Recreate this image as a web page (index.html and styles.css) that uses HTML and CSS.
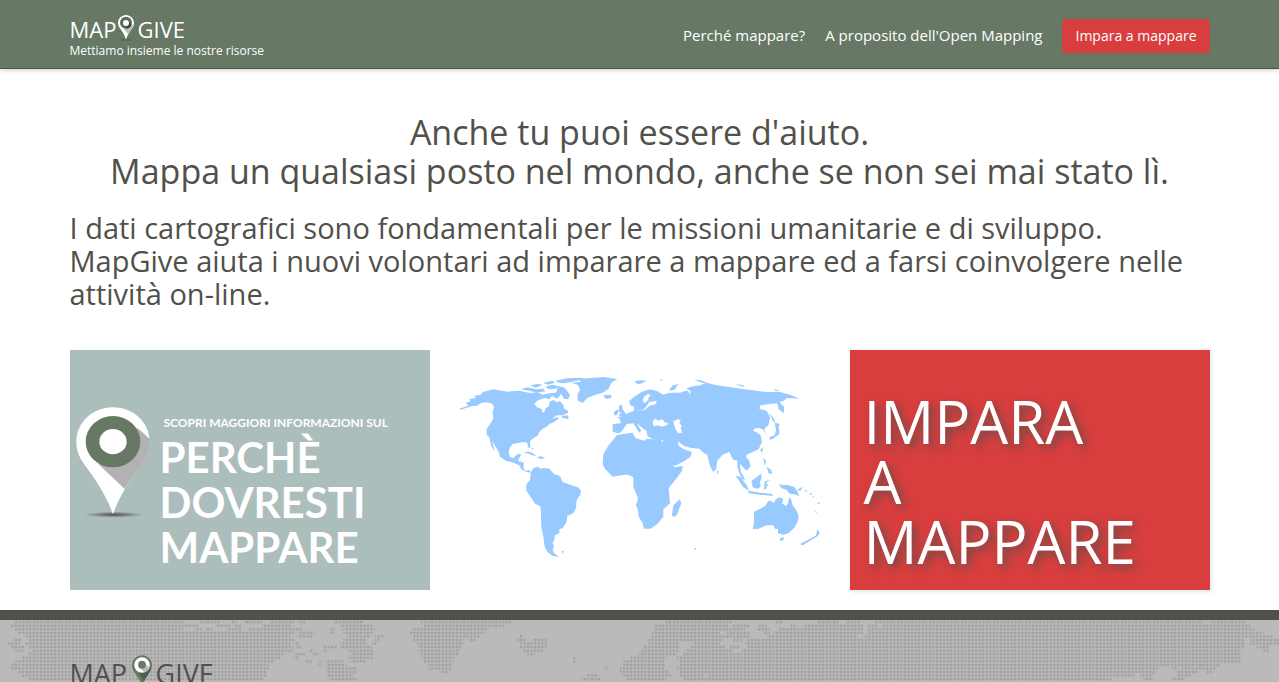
FILE: index.html
```html
<!DOCTYPE html>
<html lang="it">
<head>
<meta charset="utf-8">
<meta name="viewport" content="width=device-width, initial-scale=1">
<title>MapGive</title>
<link rel="stylesheet" href="styles.css">
</head>
<body>
<header class="site-header">
  <div class="container header-row">
    <a class="brand" href="#">
      <span class="wordmark">
        <span class="word-map">MAP</span>
        <svg class="brand-pin" viewBox="0 0 48 78" aria-hidden="true">
          <ellipse cx="24" cy="74" rx="17" ry="3" fill="#4f5c4e" opacity=".6"/>
          <path d="M24 0C11 0 0 11 0 24c0 9 5 15 10 22 6 9 11 18 14 28 3-10 8-19 14-28 5-7 10-13 10-22C48 11 37 0 24 0z" fill="#fff"/>
          <path d="M37 36L48 27c-1 8-5 13-10 19l-7 12-14-16z" fill="#bdbdbd"/>
          <circle cx="24" cy="23" r="18" fill="#5c6b5a"/>
          <path d="M30 17l11 12a18 18 0 0 1-13 12L18 30z" fill="#3f4a3e"/>
          <circle cx="24" cy="24" r="9" fill="#fff"/>
        </svg>
        <span>GIVE</span>
      </span>
      <span class="tagline">Mettiamo insieme le nostre risorse</span>
    </a>
    <nav class="main-nav">
      <a href="#">Perché mappare?</a>
      <a href="#">A proposito dell'Open Mapping</a>
      <a class="nav-button" href="#">Impara a mappare</a>
    </nav>
  </div>
</header>

<main class="container main">
  <h1 class="title">Anche tu puoi essere d'aiuto.<br>Mappa un qualsiasi posto nel mondo, anche se non sei mai stato lì.</h1>
  <h2 class="lead">I dati cartografici sono fondamentali per le missioni umanitarie e di sviluppo. MapGive aiuta i nuovi volontari ad imparare a mappare ed a farsi coinvolgere nelle attività on-line.</h2>
  <div class="tiles">
    <a class="tile tile-why" href="#">
      <svg class="why-pin" viewBox="0 0 228 336" aria-hidden="true">
        <defs><radialGradient id="ground"><stop offset="0" stop-color="#444" stop-opacity=".9"/><stop offset="1" stop-color="#444" stop-opacity="0"/></radialGradient></defs>
        <ellipse cx="113" cy="323" rx="90" ry="9" fill="url(#ground)"/>
        <path d="M111 1C50 1 1 47 1 105c0 32 14 55 34 81 34 46 60 90 76 136 16-46 42-90 76-136 20-26 34-49 34-81C221 47 172 1 111 1z" fill="#fff"/>
        <path d="M184 62l38 35c2 35-13 61-34 89-17 23-31 41-42 60L68 172z" fill="#b3b2b2"/>
        <ellipse cx="111" cy="104" rx="82" ry="77" fill="#677865"/>
        <ellipse cx="111" cy="104" rx="41" ry="38" fill="#fff"/>
      </svg>
      <span class="why-text">
        <span class="why-small">SCOPRI MAGGIORI INFORMAZIONI SUL</span>
        <span class="why-big">PERCHÈ<br>DOVRESTI<br>MAPPARE</span>
      </span>
    </a>
    <a class="tile" href="#" aria-label="Mappa del mondo">
      <svg class="world" viewBox="30 -30 1080 720" fill="#99caff">
        <!-- North and Central America -->
        <path d="M30 150L29 146 54 137 48 128 62 124 58 117 78 114 74 107 92 104 98 96 130 88 172 95 208 92 240 99 262 97 278 104 298 100 316 98 324 92 338 96 330 106 322 116 306 108 298 118 282 114 262 122 253 132 260 141 276 148 276 159 284 154 286 146 296 138 300 124 312 120 318 126 330 124 340 134 342 146 354 152 354 158 338 166 322 166 304 176 322 172 326 176 312 186 298 192 290 200 278 206 268 216 264 226 246 238 240 244 241 264 234 262 232 248 218 246 202 250 188 252 180 262 176 278 180 292 190 294 196 288 204 282 214 282 208 294 204 302 222 308 220 322 226 332 240 330 242 338 230 336 214 328 208 316 190 308 168 302 150 290 146 276 134 256 126 242 134 274 124 260 118 232 110 224 110 206 122 190 130 176 128 156 132 140 124 130 106 127 92 130 80 138 66 138z"/>
        <path d="M212 88l20-6 24 6 24-2 6 8-26 4-22-6zM242 76l22-5 14 4-22 8zM280 68l26-6 10 6-24 6zM286 80l20-6 18 4-6 8-22 2zM316 62l34-7 40-2 18 3-34 8-30 6-18-2zM322 78l20 4 12 14 6 10-6 12-12-2-8-14-14-6zM334 168l20-2 2 12-18-4zM220 280l14-6 14 6 12 8-14-2-12-6zM260 291l14-2 12 5-14 3zM244 262l6 4-2 6zM334 572l10 3-8 4z"/>
        <!-- Greenland and Iceland -->
        <path d="M362 68L392 66 388 58 420 54 462 51 502 57 484 68 476 86 458 98 432 106 412 114 398 129 384 122 382 104 390 90 384 74zM460 106l18-2 8 4-4 7-14 2zM552 64l20-3 18 1-14 8-12 3z"/>
        <!-- South America -->
        <path d="M242 338L250 324 264 320 270 326 282 324 298 326 312 342 330 348 338 366 360 374 384 382 393 392 390 406 380 420 378 444 370 460 352 468 350 486 338 504 328 508 328 520 314 526 314 538 308 548 312 560 308 570 312 580 328 590 308 588 292 576 284 560 280 530 274 500 272 440 254 430 240 408 228 390 230 372 240 360z"/>
        <!-- Africa -->
        <path d="M500 226L520 222 548 218 556 234 582 242 592 236 634 240 640 258 650 278 668 304 672 322 698 318 696 332 676 360 656 384 660 430 640 448 640 470 622 492 602 506 582 506 578 490 566 470 564 450 558 436 564 414 550 380 550 352 534 344 514 346 488 350 476 338 466 328 458 314 460 282 476 256 486 244zM670 436l20-18 4 12-14 36-10 5-4-6z"/>
        <!-- Europe and Asia -->
        <path fill-rule="evenodd" d="M488 216L488 192 512 190 510 178 502 172 518 168 536 158 552 152 552 140 540 136 538 122 556 108 574 96 600 88 622 94 640 104 658 98 690 98 702 94 714 92 720 104 722 92 708 86 722 80 750 76 770 68 800 76 842 82 900 90 950 96 990 96 1020 104 1048 116 1010 114 1002 122 988 126 1002 140 1002 160 986 148 982 130 958 132 932 136 928 146 950 152 960 172 956 194 942 208 952 228 938 208 926 204 912 206 910 212 922 218 932 226 936 246 926 268 904 278 890 284 888 292 898 302 902 318 890 332 878 320 870 312 872 334 880 348 886 362 876 356 868 340 862 320 862 302 848 298 838 276 818 284 802 302 798 328 790 336 780 318 772 284 762 280 748 266 724 264 702 258 684 244 686 258 702 268 708 270 726 276 722 290 702 304 674 318 664 306 650 280 634 254 640 240 618 240 606 236 592 228 590 214 570 198 560 190 574 212 568 218 550 190 530 192 518 210 508 220zM552 144l14 8 16-4 8-10 10-14-6-4-10 10-6-8 4-12 12-8 8 2-8 12 6 10 20-4-2 10-20 6-14 12-16 2zM610 198l14-2 12 4 14-4 6-6-14-4-4-8-12 4-10-6-8 8zM670 184l14-6 8 2-4 10 8 8-4 4 4 16-12 2-8-14z"/>
        <path d="M508 136l8-2 2 14 10 14-4 6-18 0 6-8-6-8zM492 156l10-8 4 6-6 12-8 0zM658 88l12-12 18-4-8 6-4 10-14 4zM732 59l20 2 20 8-14 0zM630 58l12 2-10 2zM856 72l28 4-6 4zM974 88l16 4-14 2zM958 158l14 18 4 14-8-8zM974 188l16 4-4 6 2 24-16 12-12 6-2-8 16-6 4-16zM800 328l6 8-4 8zM934 266l6-4-4 16-6-8zM940 294l8 8-4 16zM950 320l14 10 2 12-10-2zM856 346l16 6 20 26 4 14-16-10zM894 392l38 6 34 4 4 6-40-4-34-4zM904 362l16-10 14-12 0 14-4 14 2 12-10 6-14-4zM944 364l16-4-12 8 8 10-6 0-2 10-6 0zM986 372l14 4 10-2 22 6 10 14 6 14-18-6-10 0-10-12-16-6zM1040 390l18-10-6 12zM1070 390l20 16M1090 448l12 10-4 0z"/>
        <!-- Australia and New Zealand -->
        <path d="M912 456L930 446 946 438 954 424 964 422 970 430 978 418 988 412 1000 416 996 430 1008 438 1014 430 1018 410 1024 420 1028 436 1038 450 1046 466 1044 484 1034 502 1016 520 1000 524 984 520 984 506 976 508 970 496 950 496 926 506 908 508 912 490zM990 534l14-2-6 10-8 0zM1050 552l28-14 20-12 4-18 8 12-10 10-20 12-22 14z"/>
        <circle cx="736" cy="566" r="3"/><circle cx="1106" cy="430" r="3"/><circle cx="1068" cy="392" r="3"/><circle cx="1082" cy="402" r="3"/><circle cx="1090" cy="410" r="2"/>
      </svg>
    </a>
    <a class="tile tile-learn" href="#">IMPARA<br>A<br>MAPPARE</a>
  </div>
</main>

<footer class="site-footer">
  <svg class="dot-map" viewBox="0 60 3837 186" preserveAspectRatio="xMinYMin slice" aria-hidden="true">
    <defs>
      <pattern id="dots" x="0" y="61.2" width="10.667" height="10.667" patternUnits="userSpaceOnUse"><rect x="2" y="2" width="6.8" height="6.8" fill="#9f9f9f"/></pattern>
    </defs>
    <g stroke="url(#dots)" stroke-width="10.667" fill="none">
      <path d="M43 66.5H550M595 66.5H659M691 66.5H712M733 66.5H787M808 66.5H883M893 66.5H915M1000 66.5H1090M1262 66.5H1535M1995 66.5H2195M2325 66.5H2346M2453 66.5H2517M2540 66.5H2580M2625 66.5H3610M3632 66.5H3738"/>
      <path d="M32 77.2H595M648 77.2H690M702 77.2H723M787 77.2H872M1020 77.2H1120M1272 77.2H1515M1963 77.2H2185M2195 77.2H2250M2275 77.2H2300M2370 77.2H2390M2410 77.2H2590M2602 77.2H2635M2645 77.2H3750"/>
      <path d="M43 87.8H550M585 87.8H605M617 87.8H638M680 87.8H723M744 87.8H905M989 87.8H1006M1030 87.8H1125M1240 87.8H1462M1963 87.8H2235M2270 87.8H2310M2335 87.8H2590M2602 87.8H3765"/>
      <path d="M53 98.5H883M893 98.5H943M989 98.5H1006M1030 98.5H1120M1230 98.5H1455M1955 98.5H2160M2180 98.5H2250M2290 98.5H2310M2320 98.5H2590M2602 98.5H3790"/>
      <path d="M75 109.2H870M893 109.2H936M1042 109.2H1110M1125 109.2H1155M1240 109.2H1440M1560 109.2H1570M1955 109.2H2250M2300 109.2H2570M2590 109.2H3820"/>
      <path d="M43 119.8H65M85 119.8H883M1030 119.8H1100M1125 119.8H1140M1240 119.8H1390M1410 119.8H1430M1550 119.8H1580M1600 119.8H1640M1945 119.8H2170M2200 119.8H2225M2240 119.8H3735M3750 119.8H3837"/>
      <path d="M22 130.5H60M75 130.5H872M883 130.5H900M1020 130.5H1100M1115 130.5H1130M1250 130.5H1390M1560 130.5H1640M1945 130.5H2035M2080 130.5H2160M2235 130.5H3735M3750 130.5H3837"/>
      <path d="M32 141.2H75M85 141.2H880M890 141.2H905M968 141.2H1010M1020 141.2H1115M1255 141.2H1385M1560 141.2H1640M1930 141.2H2040M2070 141.2H2175M2190 141.2H2220M2240 141.2H3735M3770 141.2H3808"/>
      <path d="M43 151.8H70M96 151.8H880M925 151.8H940M968 151.8H985M1042 151.8H1120M1255 151.8H1380M1570 151.8H1635M1925 151.8H2035M2060 151.8H2200M2225 151.8H3718M3790 151.8H3810"/>
      <path d="M85 162.5H850M883 162.5H915M936 162.5H955M1052 162.5H1120M1262 162.5H1375M1582 162.5H1605M1915 162.5H2030M2050 162.5H3725"/>
      <path d="M64 173.2H840M880 173.2H895M1042 173.2H1120M1265 173.2H1365M1720 173.2H1730M1890 173.2H2000M2030 173.2H3725"/>
      <path d="M43 183.8H820M915 183.8H935M955 183.8H965M978 183.8H1030M1052 183.8H1100M1272 183.8H1360M1720 183.8H1730M1870 183.8H1995M2040 183.8H3725"/>
      <path d="M32 194.5H808M955 194.5H965M978 194.5H1040M1285 194.5H1355M1870 194.5H1995M2040 194.5H3660"/>
      <path d="M32 205.2H808M978 205.2H1070M1285 205.2H1355M1815 205.2H1825M1860 205.2H1995M2030 205.2H3475M3515 205.2H3535M3545 205.2H3650"/>
      <path d="M53 215.8H800M978 215.8H1070M1325 215.8H1345M1860 215.8H2005M2040 215.8H3465M3535 215.8H3595M3620 215.8H3640"/>
      <path d="M64 226.5H800M978 226.5H1060M1760 226.5H1795M1870 226.5H2015M2040 226.5H2110M2125 226.5H3405M3420 226.5H3460M3530 226.5H3575"/>
      <path d="M85 237.2H790M989 237.2H1070M1745 237.2H1800M1880 237.2H2000M2050 237.2H3335M3430 237.2H3460M3515 237.2H3555"/>
    </g>
  </svg>
  <div class="container footer-content">
    <a class="wordmark footer-mark" href="#">
      <span class="footer-map">MAP</span>
      <svg class="footer-pin" viewBox="0 0 62 100" aria-hidden="true">
        <path d="M31 0C14 0 0 14 0 31c0 22 22 32 31 67 9-35 31-45 31-67C62 14 48 0 31 0z" fill="#677865"/>
        <path d="M50 44l10-6c-3 13-16 28-22 42L20 52z" fill="#506050"/>
        <circle cx="31" cy="30" r="24" fill="#fff"/>
        <path d="M38 23l16 15a24 24 0 0 1-16 14L24 38z" fill="#bababa"/>
        <circle cx="31" cy="29" r="12" fill="#677865"/>
      </svg>
      <span>GIVE</span>
    </a>
  </div>
</footer>
</body>
</html>
```
FILE: styles.css
```css
* { box-sizing: border-box; }

body {
  margin: 0;
  height: 100vh;
  overflow: hidden;
  display: flex;
  flex-direction: column;
  background: #fff;
  color: #51504b;
  font-family: "Open Sans", "Noto Sans", sans-serif;
}

a { color: inherit; text-decoration: none; }

.container {
  width: 100%;
  max-width: 1170px;
  margin: 0 auto;
  padding: 0 15px;
}

.site-header {
  flex: none;
  background: #677865;
  border-bottom: 1px solid #51504b;
  box-shadow: 0 1px 5px rgba(0, 0, 0, .2);
  color: #fff;
}

.header-row {
  display: flex;
  justify-content: space-between;
  align-items: flex-start;
  min-height: 68px;
}

.brand { padding-top: 15px; font-weight: 500; }

.wordmark {
  display: flex;
  align-items: flex-start;
  font-size: 22px;
  font-weight: 500;
  line-height: 28px;
}

.word-map { width: 48px; }
.brand-pin { width: 16px; height: 26px; margin-right: 4px; }

.tagline {
  display: block;
  font-size: 12px;
  line-height: 16px;
}

.main-nav {
  display: flex;
  align-items: baseline;
  gap: 20px;
  padding-top: 19px;
  font-size: 15px;
  line-height: 20px;
}

.nav-button {
  padding: 7px 13px;
  border-radius: 4px;
  background: #d83e3e;
  font-size: 14px;
}

.main { flex: none; padding-top: 44px; padding-bottom: 20px; }

.title, .lead {
  margin: 0;
  font-weight: 500;
}

.title {
  font-size: 34px;
  line-height: 39px;
  text-align: center;
}

.lead {
  margin-top: 20px;
  font-size: 29px;
  line-height: 33px;
}

.tiles {
  display: grid;
  grid-template-columns: repeat(3, 1fr);
  gap: 30px;
  margin-top: 40px;
}

.tile { display: block; min-height: 240px; }

.tile-why {
  display: flex;
  gap: 8px;
  padding: 57px 6px 0;
  background: #acbebc;
  color: #fff;
  font-family: Lato, sans-serif;
}

.why-pin { flex: none; width: 76px; height: 112px; }

.why-text { padding-top: 8px; font-weight: 700; }

.why-small {
  display: block;
  padding-left: 4px;
  font-size: 12px;
  line-height: 16px;
  white-space: nowrap;
}

.why-big {
  display: block;
  margin-top: 4px;
  font-size: 42px;
  line-height: 45px;
}

.world { display: block; width: 100%; height: auto; }

.tile-learn {
  padding: 41px 14px 0;
  background: #d83e3e;
  box-shadow: 1px 1px 5px rgba(0, 0, 0, .12);
  color: #fff;
  font-size: 60px;
  line-height: 60px;
  text-shadow: 4px 4px 8px rgba(81, 80, 75, .85);
}

.site-footer {
  position: relative;
  flex: 1;
  min-height: 0;
  overflow: hidden;
  border-top: 10px solid #51504b;
  background: #bababa;
}

.dot-map { position: absolute; inset: 0; width: 100%; height: auto; }

.footer-content { position: relative; padding-top: 35px; }

.footer-mark { font-size: 27px; line-height: 37px; }
.footer-map { width: 62px; }
.footer-pin { width: 20px; height: 33px; margin-right: 4px; }
```
